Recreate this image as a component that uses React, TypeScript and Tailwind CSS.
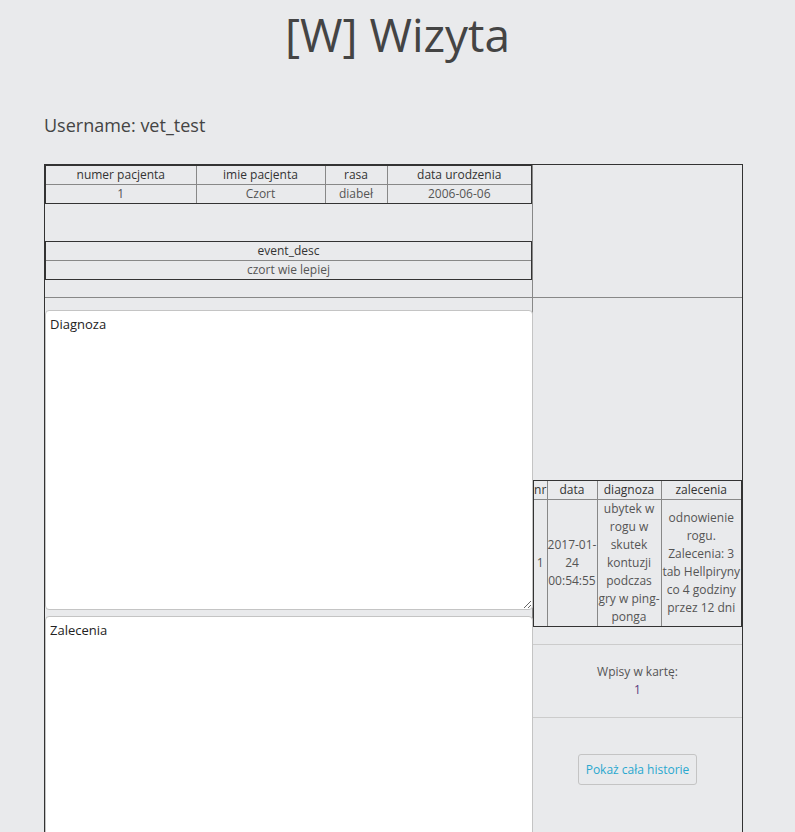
import { useState } from "react";

const patientCols = ["numer pacjenta", "imie pacjenta", "rasa", "data urodzenia"];
const patientRow = ["1", "Czort", "diabeł", "2006-06-06"];
const patientWidths = ["w-[150px]", "w-[129px]", "w-[62px]", "w-auto"];

const historyCols = ["nr", "data", "diagnoza", "zalecenia"];
const historyWidths = ["w-[13px]", "w-[50px]", "w-[64px]", "w-auto"];

const historyRows = [
  {
    nr: "1",
    data: "2017-01-24 00:54:55",
    diagnoza: "ubytek w rogu w skutek kontuzji podczas gry w ping-ponga",
    zalecenia: "odnowienie rogu. Zalecenia: 3 tab Hellpiryny co 4 godziny przez 12 dni",
  },
];

const thClass = "border-r border-b border-[#888] p-0 text-center font-normal text-[#333] last:border-r-0";
const tdClass = "border-r border-[#888] p-0 text-center text-[#555] last:border-r-0";

function PatientTable() {
  return (
    <div className="border border-[#333]">
      <table className="w-full border-collapse text-[12px] leading-[18px]">
        <thead>
          <tr>
            {patientCols.map((col, i) => (
              <th key={col} className={`${patientWidths[i]} ${thClass}`}>
                {col}
              </th>
            ))}
          </tr>
        </thead>
        <tbody>
          <tr>
            {patientRow.map((value, i) => (
              <td key={i} className={tdClass}>
                {value}
              </td>
            ))}
          </tr>
        </tbody>
      </table>
    </div>
  );
}

function EventTable() {
  return (
    <div className="border border-[#333]">
      <table className="w-full border-collapse text-[12px] leading-[18px]">
        <thead>
          <tr>
            <th className={thClass}>event_desc</th>
          </tr>
        </thead>
        <tbody>
          <tr>
            <td className={tdClass}>czort wie lepiej</td>
          </tr>
        </tbody>
      </table>
    </div>
  );
}

function HistoryTable() {
  return (
    <div className="border border-[#333]">
      <table className="w-full border-collapse text-[12px] leading-[18px]">
        <thead>
          <tr>
            {historyCols.map((col, i) => (
              <th key={col} className={`${historyWidths[i]} ${thClass}`}>
                {col}
              </th>
            ))}
          </tr>
        </thead>
        <tbody>
          {historyRows.map((row) => (
            <tr key={row.nr}>
              <td className={tdClass}>{row.nr}</td>
              <td className={tdClass}>{row.data}</td>
              <td className={tdClass}>{row.diagnoza}</td>
              <td className={tdClass}>{row.zalecenia}</td>
            </tr>
          ))}
        </tbody>
      </table>
    </div>
  );
}

export default function App() {
  const [diagnoza, setDiagnoza] = useState("Diagnoza");
  const [zalecenia, setZalecenia] = useState("Zalecenia");

  return (
    <div className="min-h-screen bg-[#e9eaec] pb-10 font-['Open_Sans',sans-serif] text-[#333]">
      <h1 className="pt-[7px] text-center text-[46px] leading-[54px] font-normal text-[#444]">[W] Wizyta</h1>

      <p className="mt-[52px] ml-[44px] text-[18px] leading-[24px] text-[#444]">Username: vet_test</p>

      <div className="mt-[27px] ml-[44px] w-[699px] border border-[#333]">
        <div className="flex border-b border-[#888]">
          <div className="w-[488px] border-r border-[#888] pb-[17px]">
            <PatientTable />
            <div className="mt-[37px]">
              <EventTable />
            </div>
          </div>
          <div className="flex-1" />
        </div>

        <div className="flex">
          <div className="w-[488px] border-r border-[#888] pt-[12px]">
            <textarea
              value={diagnoza}
              onChange={(e) => setDiagnoza(e.target.value)}
              className="block h-[300px] w-[488px] rounded-[4px] border border-[#c4c4c4] bg-white px-[4px] py-[4px] text-[13px] leading-[18px] text-[#222] outline-none"
            />
            <textarea
              value={zalecenia}
              onChange={(e) => setZalecenia(e.target.value)}
              className="mt-[6px] block h-[300px] w-[488px] rounded-[4px] border border-[#c4c4c4] bg-white px-[4px] py-[4px] text-[13px] leading-[18px] text-[#222] outline-none"
            />
          </div>

          <div className="flex flex-1 flex-col">
            <div className="h-[347px] border-b border-[#ccc] pt-[182px]">
              <HistoryTable />
            </div>
            <div className="flex h-[73px] flex-col items-center justify-center border-b border-[#ccc] text-[12px] leading-[18px] text-[#555]">
              <span>Wpisy w kartę:</span>
              <span className="text-[#5c3b7e]">1</span>
            </div>
            <div className="flex justify-center pt-[36px]">
              <button className="h-[31px] rounded-[3px] border border-[#c4c4c4] bg-transparent px-[7px] text-[12px] text-[#2aa8cf]">
                Pokaż cała historie
              </button>
            </div>
          </div>
        </div>
      </div>
    </div>
  );
}
